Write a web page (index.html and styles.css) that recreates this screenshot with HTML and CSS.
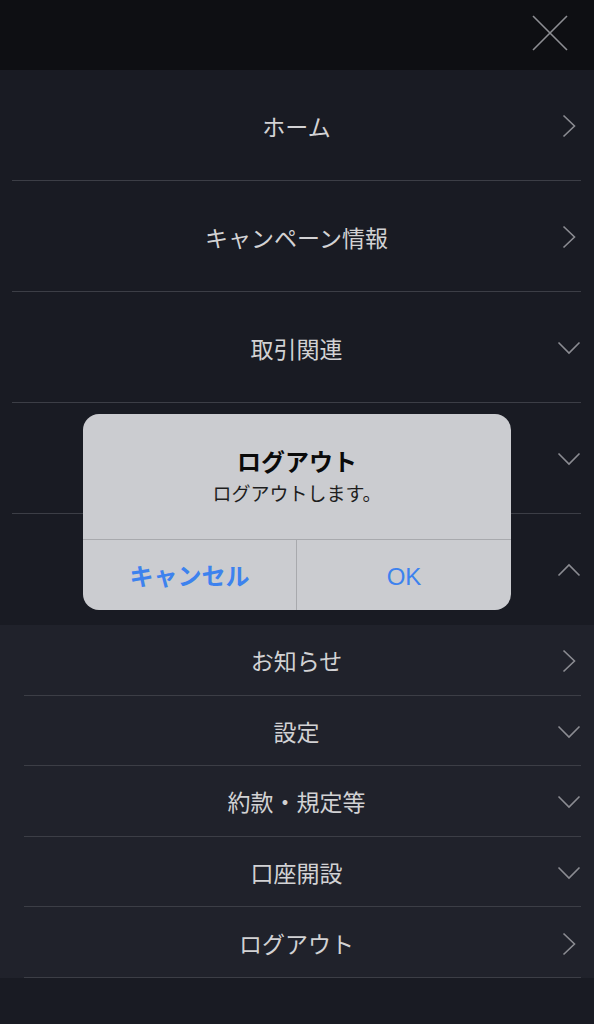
FILE: index.html
```html
<!DOCTYPE html>
<html lang="ja">
<head>
<meta charset="utf-8">
<link rel="stylesheet" href="styles.css">
</head>
<body>
<div class="screen">
  <header class="topbar">
    <button class="close" aria-label="閉じる">
      <svg width="36" height="36" viewBox="0 0 36 36"><path d="M1 1 L35 35 M35 1 L1 35" stroke="#8d8e93" stroke-width="1.6" fill="none"/></svg>
    </button>
  </header>
  <nav class="menu">
    <div class="item"><span class="label">ホーム</span><svg class="chev" width="24" height="24" viewBox="0 0 24 24"><path d="M6.5 1.5 L17.5 12 L6.5 22.5" class="cs"/></svg></div>
    <div class="item"><span class="label">キャンペーン情報</span><svg class="chev" width="24" height="24" viewBox="0 0 24 24"><path d="M6.5 1.5 L17.5 12 L6.5 22.5" class="cs"/></svg></div>
    <div class="item"><span class="label">取引関連</span><svg class="chev" width="24" height="24" viewBox="0 0 24 24"><path d="M1.5 6.5 L12 17 L22.5 6.5" class="cs"/></svg></div>
    <div class="item"><span class="label"></span><svg class="chev" width="24" height="24" viewBox="0 0 24 24"><path d="M1.5 6.5 L12 17 L22.5 6.5" class="cs"/></svg></div>
    <div class="item last"><span class="label"></span><svg class="chev" width="24" height="24" viewBox="0 0 24 24"><path d="M1.5 17.5 L12 7 L22.5 17.5" class="cs"/></svg></div>
  </nav>
  <div class="submenu">
    <div class="subitem"><span class="label">お知らせ</span><svg class="chev" width="24" height="24" viewBox="0 0 24 24"><path d="M6.5 1.5 L17.5 12 L6.5 22.5" class="cs"/></svg></div>
    <div class="subitem"><span class="label">設定</span><svg class="chev" width="24" height="24" viewBox="0 0 24 24"><path d="M1.5 6.5 L12 17 L22.5 6.5" class="cs"/></svg></div>
    <div class="subitem"><span class="label">約款・規定等</span><svg class="chev" width="24" height="24" viewBox="0 0 24 24"><path d="M1.5 6.5 L12 17 L22.5 6.5" class="cs"/></svg></div>
    <div class="subitem"><span class="label">口座開設</span><svg class="chev" width="24" height="24" viewBox="0 0 24 24"><path d="M1.5 6.5 L12 17 L22.5 6.5" class="cs"/></svg></div>
    <div class="subitem"><span class="label">ログアウト</span><svg class="chev" width="24" height="24" viewBox="0 0 24 24"><path d="M6.5 1.5 L17.5 12 L6.5 22.5" class="cs"/></svg></div>
  </div>

  <div class="alert" role="alertdialog">
    <div class="alert-body">
      <div class="alert-title">ログアウト</div>
      <div class="alert-msg">ログアウトします。</div>
    </div>
    <div class="alert-actions">
      <button class="btn cancel">キャンセル</button>
      <button class="btn ok">OK</button>
    </div>
  </div>
</div>
</body>
</html>
```

FILE: styles.css
```css
* { box-sizing: border-box; }
html, body {
  margin: 0;
  padding: 0;
  background: #191b23;
}
body {
  font-family: "Noto Sans CJK JP", "Noto Sans", sans-serif;
  width: 594px;
  height: 1024px;
  overflow: hidden;
}
.screen {
  position: relative;
  width: 594px;
  height: 1024px;
  background: #191b23;
}
.topbar {
  height: 70px;
  background: #0e0f13;
  display: flex;
  justify-content: flex-end;
  align-items: flex-start;
  padding: 15px 26px 0 0;
}
.close {
  border: 0;
  padding: 0;
  background: none;
  width: 36px;
  height: 36px;
  display: block;
}
.close svg { display: block; }
.menu {
  margin: 0 13px 0 12px;
}
.item, .subitem {
  display: grid;
  grid-template-columns: 1fr auto 1fr;
  align-items: center;
  color: #d2d2d4;
  font-size: 23px;
}
.item {
  height: 111px;
  padding-top: 1px;
  border-bottom: 1px solid #3c3e46;
}
.item.last { border-bottom: 0; height: 111px; }
.label {
  grid-column: 2;
  line-height: 30px;
  white-space: nowrap;
}
.chev {
  grid-column: 3;
  justify-self: end;
  display: block;
}
.subitem .chev { margin-top: 2px; }
.cs {
  fill: none;
  stroke: #8b8c92;
  stroke-width: 1.6;
}
.submenu {
  background: #20222b;
  padding: 0 13px 0 12px;
}
.subitem {
  height: 70.6px;
  background: linear-gradient(#3c3e46, #3c3e46) no-repeat left 12px bottom 0 / calc(100% - 12px) 1px;
}
.alert {
  position: absolute;
  left: 83px;
  top: 414px;
  width: 428px;
  height: 196px;
  background: #cbccd0;
  border-radius: 16px;
  overflow: hidden;
  display: flex;
  flex-direction: column;
  text-align: center;
}
.alert-body {
  height: 126px;
  padding-top: 30px;
  border-bottom: 1px solid #a8a9ad;
}
.alert-title {
  font-size: 24px;
  font-weight: 700;
  line-height: 34px;
  color: #0a0a0a;
}
.alert-msg {
  font-size: 19px;
  line-height: 30px;
  color: #1e1e1e;
}
.alert-actions {
  flex: 1;
  display: grid;
  grid-template-columns: 214px 1fr;
}
.btn {
  border: 0;
  background: none;
  font-family: inherit;
  font-size: 24px;
  color: #3d82ee;
  padding: 0;
}
.cancel {
  font-weight: 700;
  border-right: 1px solid #a8a9ad;
  padding-bottom: 2px;
}
.ok {
  font-family: "Liberation Sans", "Noto Sans", sans-serif;
  font-size: 24px;
  padding-top: 3px;
}
```
